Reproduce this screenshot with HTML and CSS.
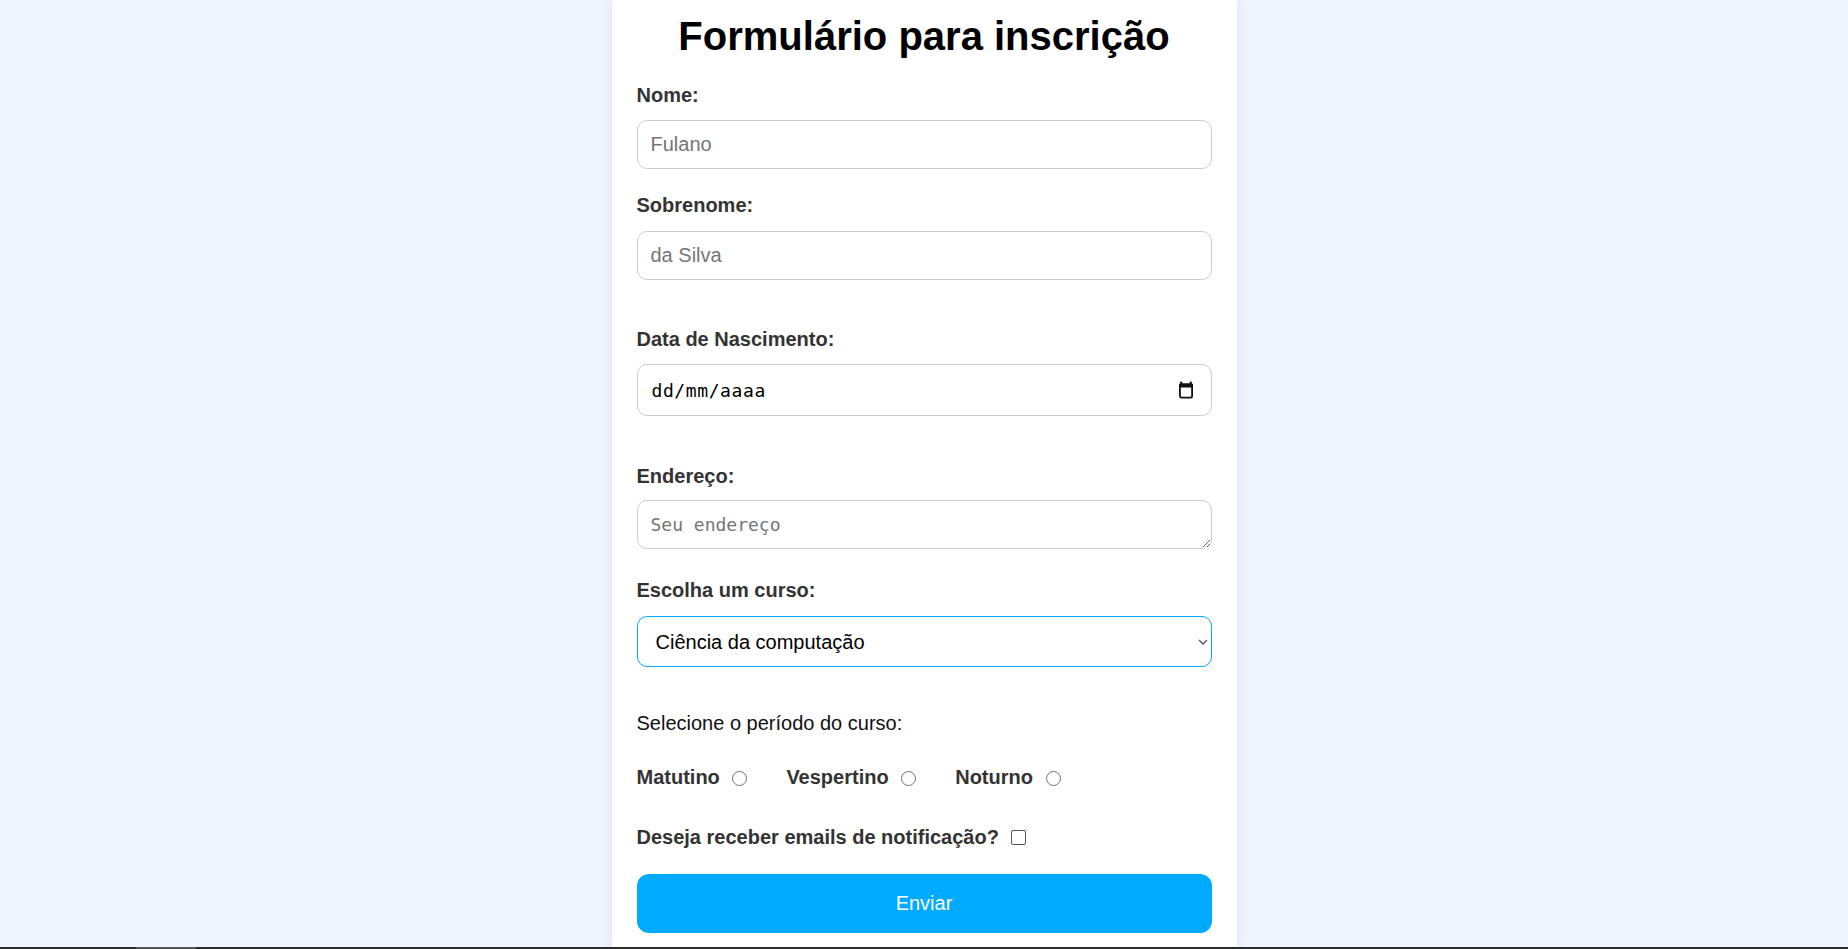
FILE: index.html
```html
<!DOCTYPE html>
<html lang="pt-BR">
<head>
<meta charset="utf-8">
<title>Formulário para inscrição</title>
<link rel="stylesheet" href="styles.css">
</head>
<body>
<main class="card">
  <h1 class="title">Formulário para inscrição</h1>
  <form class="form">
    <label class="field-label mt-first" for="nome">Nome:</label>
    <input class="field mt-13" id="nome" type="text" placeholder="Fulano">

    <label class="field-label mt-25" for="sobrenome">Sobrenome:</label>
    <input class="field mt-14" id="sobrenome" type="text" placeholder="da Silva">

    <label class="field-label mt-48" for="nascimento">Data de Nascimento:</label>
    <div class="date-field mt-13">
      <input class="date-input" id="nascimento" type="text" placeholder="dd/mm/aaaa">
      <svg class="cal-icon" width="16" height="18" viewBox="0 0 16 18" aria-hidden="true">
        <rect x="1.9" y="3.4" width="12.2" height="13.2" rx="1.6" fill="none" stroke="#111" stroke-width="1.8"/>
        <rect x="1" y="2.5" width="14" height="4" rx="1.2" fill="#111"/>
        <rect x="2.2" y="0.6" width="2" height="3" fill="#111"/>
        <rect x="11.8" y="0.6" width="2" height="3" fill="#111"/>
      </svg>
    </div>

    <label class="field-label mt-49" for="endereco">Endereço:</label>
    <textarea class="area mt-12" id="endereco" placeholder="Seu endereço"></textarea>

    <label class="field-label mt-30" for="curso">Escolha um curso:</label>
    <div class="select-wrap mt-14">
      <select class="select" id="curso">
        <option>Ciência da computação</option>
        <option>Engenharia de software</option>
        <option>Sistemas de informação</option>
      </select>
      <svg class="select-arrow" width="10" height="6" viewBox="0 0 10 6" aria-hidden="true">
        <path d="M1 1 L5 5 L9 1" fill="none" stroke="#555" stroke-width="1.3"/>
      </svg>
    </div>

    <p class="question mt-45">Selecione o período do curso:</p>
    <div class="options mt-31">
      <label class="option">Matutino <input class="radio" type="radio" name="periodo" value="matutino"></label>
      <label class="option">Vespertino <input class="radio" type="radio" name="periodo" value="vespertino"></label>
      <label class="option">Noturno <input class="radio" type="radio" name="periodo" value="noturno"></label>
    </div>

    <label class="option mt-37">Deseja receber emails de notificação? <input class="check" type="checkbox" name="emails"></label>

    <button class="submit mt-25" type="submit">Enviar</button>
  </form>
</main>
<div class="screen-edge"><span class="screen-edge-thumb"></span></div>
</body>
</html>
```

FILE: styles.css
```css
html, body {
  margin: 0;
  padding: 0;
}

body {
  background: #eef5fe;
  font-family: "Liberation Sans", Arial, sans-serif;
  color: #000;
  min-height: 100vh;
}

.card {
  box-sizing: border-box;
  width: 625px;
  min-height: 100vh;
  margin: 0 auto;
  padding: 13px 25px 0;
  background: #fff;
  box-shadow: 0 0 12px rgba(40, 70, 120, 0.09);
}

.title {
  margin: 0;
  font-size: 40px;
  font-weight: 700;
  line-height: 46px;
  text-align: center;
  color: #000;
}

.form {
  display: flex;
  flex-direction: column;
}

.field-label {
  display: block;
  font-size: 20px;
  font-weight: 700;
  line-height: 23px;
  color: #333;
}

.mt-first { margin-top: 25px; }
.mt-12 { margin-top: 12px; }
.mt-13 { margin-top: 13px; }
.mt-14 { margin-top: 14px; }
.mt-25 { margin-top: 25px; }
.mt-30 { margin-top: 30px; }
.mt-31 { margin-top: 31px; }
.mt-37 { margin-top: 37px; }
.mt-45 { margin-top: 45px; }
.mt-48 { margin-top: 48px; }
.mt-49 { margin-top: 49px; }

.field {
  box-sizing: border-box;
  width: 100%;
  height: 49px;
  margin-bottom: 0;
  padding: 0 13px;
  border: 1px solid #ccc;
  border-radius: 10px;
  background: #fff;
  font-family: "Liberation Sans", Arial, sans-serif;
  font-size: 20px;
  color: #000;
  outline: none;
}

.field::placeholder {
  color: #757575;
}

.date-field {
  box-sizing: border-box;
  display: flex;
  align-items: center;
  justify-content: space-between;
  width: 100%;
  height: 52px;
  padding: 0 17px 0 14px;
  border: 1px solid #ccc;
  border-radius: 10px;
  background: #fff;
}

.date-input {
  flex: 1;
  min-width: 0;
  padding: 0;
  border: none;
  outline: none;
  background: transparent;
  font-family: "DejaVu Sans Mono", "Liberation Mono", monospace;
  font-size: 18px;
  letter-spacing: 0.6px;
  color: #000;
}

.date-input::placeholder {
  color: #000;
}

.cal-icon {
  flex: none;
  display: block;
}

.area {
  box-sizing: border-box;
  display: block;
  width: 100%;
  height: 49px;
  padding: 13px 13px 0;
  border: 1px solid #ccc;
  border-radius: 10px;
  background: #fff;
  font-family: "DejaVu Sans Mono", "Liberation Mono", monospace;
  font-size: 18px;
  color: #000;
  outline: none;
  resize: vertical;
}

.area::placeholder {
  color: #757575;
}

.select-wrap {
  position: relative;
}

.select {
  box-sizing: border-box;
  display: block;
  width: 100%;
  height: 51px;
  padding: 0 30px 0 18px;
  border: 1px solid #0aaaff;
  border-radius: 10px;
  background-color: #fff;
  font-family: "Liberation Sans", Arial, sans-serif;
  font-size: 20px;
  color: #000;
  outline: none;
  appearance: none;
  -webkit-appearance: none;
}

.select-arrow {
  position: absolute;
  right: 4px;
  top: 23px;
  display: block;
  pointer-events: none;
}

.question {
  margin-bottom: 0;
  font-size: 20px;
  line-height: 23px;
  color: #111;
}

.options {
  display: flex;
  align-items: baseline;
}

.option {
  display: block;
  font-size: 20px;
  font-weight: 700;
  line-height: 23px;
  color: #333;
}

.options .option {
  margin-right: 36px;
}

.radio {
  appearance: none;
  -webkit-appearance: none;
  box-sizing: border-box;
  width: 15px;
  height: 15px;
  margin: 0 3px -2px 7px;
  border: 1.3px solid #707070;
  border-radius: 50%;
  background: #fff;
  vertical-align: baseline;
}

.check {
  appearance: none;
  -webkit-appearance: none;
  box-sizing: border-box;
  width: 15px;
  height: 15px;
  margin: 0 3px -1px 7px;
  border: 1.5px solid #555;
  border-radius: 2px;
  background: #fff;
  vertical-align: baseline;
}

.submit {
  box-sizing: border-box;
  width: 100%;
  height: 59px;
  padding: 0;
  border: none;
  border-radius: 12px;
  background: #00aaff;
  font-family: "Liberation Sans", Arial, sans-serif;
  font-size: 20px;
  color: #fff;
  cursor: pointer;
}

.screen-edge {
  position: fixed;
  left: 0;
  right: 0;
  bottom: 0;
  height: 2px;
  background: #2c2c2c;
}

.screen-edge-thumb {
  position: absolute;
  left: 136px;
  top: 0;
  width: 60px;
  height: 2px;
  background: #555;
}
```
